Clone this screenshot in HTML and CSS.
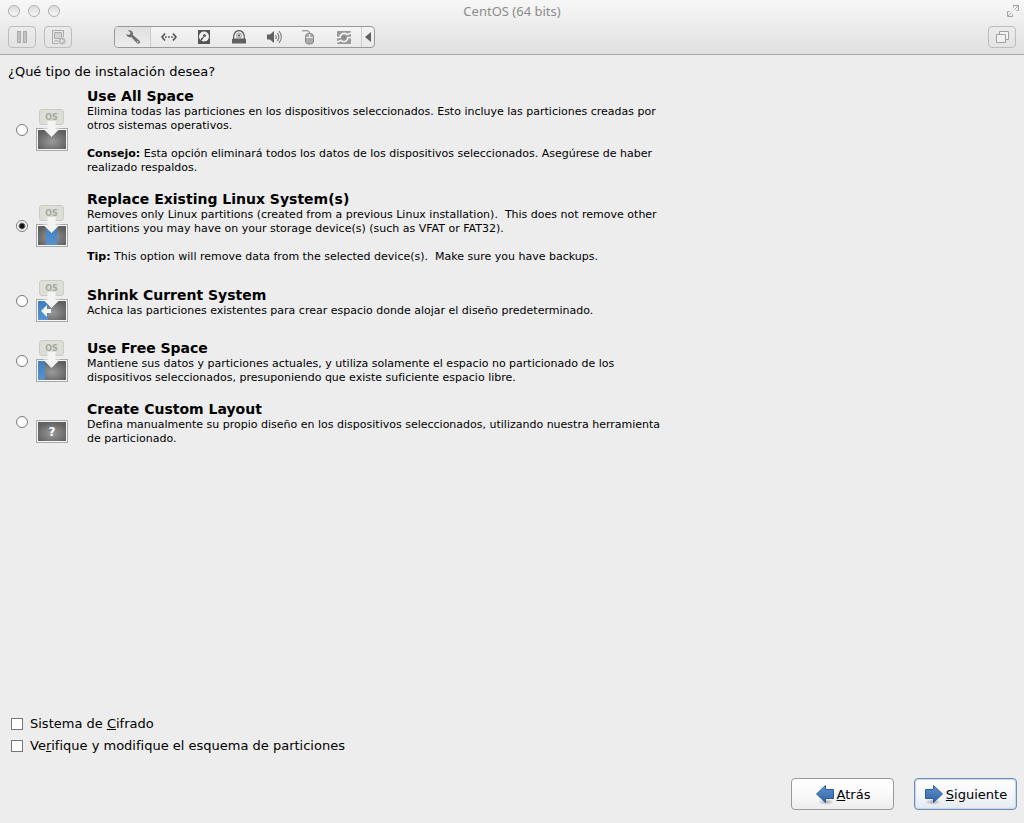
FILE: index.html
```html
<!DOCTYPE html>
<html lang="es">
<head>
    <meta charset="UTF-8">
    <meta name="viewport" content="width=device-width, initial-scale=1.0">
    <title>CentOS (64 bits)</title>
    <link rel="stylesheet" href="styles.css">
</head>
<body>
    <!-- Piezas comunes de los iconos -->
    <svg class="defs" aria-hidden="true">
        <defs>
            <radialGradient id="screenFill" cx="50%" cy="60%" r="60%">
                <stop offset="0" stop-color="#9a9a9a"/>
                <stop offset="1" stop-color="#606060"/>
            </radialGradient>
            <linearGradient id="blueFill" x1="0" y1="0" x2="0" y2="1">
                <stop offset="0" stop-color="#3f7fc0"/>
                <stop offset="1" stop-color="#5792cf"/>
            </linearGradient>
            <linearGradient id="arrowFill" x1="0" y1="0" x2="0" y2="1">
                <stop offset="0" stop-color="#5f95cf"/>
                <stop offset="1" stop-color="#2f62a3"/>
            </linearGradient>
            <radialGradient id="shadowFill">
                <stop offset="0" stop-color="#000" stop-opacity="0.3"/>
                <stop offset="1" stop-color="#000" stop-opacity="0"/>
            </radialGradient>
        </defs>
        <symbol id="screen" viewBox="0 0 32 42">
            <rect x="0.5" y="19.5" width="31" height="22" fill="#f6f6f6" stroke="#a9a9a9"/>
            <rect x="2" y="21" width="28" height="19" fill="url(#screenFill)"/>
        </symbol>
        <symbol id="box" viewBox="0 0 32 42">
            <rect x="3.5" y="0.5" width="24" height="15" rx="2.5" fill="#dcdfd6" stroke="#cbcec6"/>
            <path d="M11.500 12h8v7.500h4.500L15.500 28 7 19.500h4.500z" fill="#f4f5f2"/>
        </symbol>
    </svg>

    <!-- Ventana -->
    <header class="titlebar">
        <div class="title-row">
            <div class="lights">
                <button type="button" aria-label="Cerrar"></button>
                <button type="button" aria-label="Minimizar"></button>
                <button type="button" aria-label="Maximizar"></button>
            </div>
            <h1>CentOS (64 bits)</h1>
            <button type="button" class="fullscreen" aria-label="Pantalla completa">
                <svg width="14" height="14" viewBox="0 0 14 14" fill="none" stroke="#a2a2a2" stroke-width="1">
                    <path d="M7.500 1.500h5v5M12 2L8.500 5.500M10.500 6.500h2M7.500 3.500v-2M6.500 12.500h-5v-5M2 12l3.500-3.500M3.500 7.500h-2M6.500 10.500v2"/>
                </svg>
            </button>
        </div>
        <div class="toolbar">
            <button type="button" class="tool" aria-label="Pausar">
                <svg width="16" height="16" viewBox="0 0 16 16" fill="#c3c3c3" stroke="#aaa">
                    <rect x="3.500" y="2.500" width="3" height="11"/>
                    <rect x="9.500" y="2.500" width="3" height="11"/>
                </svg>
            </button>
            <button type="button" class="tool" aria-label="Instantáneas">
                <svg width="16" height="16" viewBox="0 0 16 16" fill="none" stroke="#aaa">
                    <path d="M8 14.500H2.500v-13h11V8"/>
                    <path d="M4.500 3.500h7v6h-7z" fill="#d2d2d2"/>
                    <path d="M4 12h4"/>
                    <circle cx="12" cy="12" r="3.500" fill="#bbb" stroke="none"/>
                    <path d="M10.500 12h3M12 10.500v3" stroke="#eee"/>
                </svg>
            </button>
            <div class="segments">
                <button type="button" class="active" aria-label="Configuración">
                    <svg width="16" height="16" viewBox="0 0 16 16">
                        <path d="M3 1.500C5.500.8 8 2 8 4.700c0 .6 0 .9-.2 1.300l6.500 5.400c1.200 1.200.8 2.900-.5 3.200-.9.300-1.700-.1-2.300-.8L6.300 7.900C4 8.800 1.500 7.600 1 5.100l2.300.8L5.200 5l.2-1.600z" fill="#707070"/>
                        <circle cx="12.600" cy="12.800" r="0.800" fill="#eee"/>
                    </svg>
                </button>
                <button type="button" aria-label="Red">
                    <svg width="16" height="16" viewBox="0 0 16 16" fill="none" stroke="#505050" stroke-width="1.600">
                        <path d="M4 4.500L1 8l3 3.500M12 4.500L15 8l-3 3.500"/>
                        <path d="M4 8h8.500" stroke-dasharray="1.700 1.400"/>
                    </svg>
                </button>
                <button type="button" aria-label="Disco duro">
                    <svg width="16" height="16" viewBox="0 0 16 16">
                        <rect x="2.500" y="1.500" width="11" height="13" fill="#555" stroke="#555"/>
                        <circle cx="8" cy="7.500" r="5" fill="#f0f0f0"/>
                        <circle cx="8.500" cy="6.500" r="1.500" fill="#666"/>
                        <path d="M4 13l1-3.500 4-3-2.500 4z" fill="#555"/>
                        <path d="M10 12l2-2" stroke="#eee"/>
                    </svg>
                </button>
                <button type="button" aria-label="CD/DVD">
                    <svg width="16" height="16" viewBox="0 0 16 16">
                        <path d="M2.500 10C2.500 4.500 4.500 1.700 8 1.700s5.500 2.800 5.500 8.300z" fill="#f0f0f0" stroke="#555" stroke-width="1.200"/>
                        <circle cx="8" cy="6.500" r="2.500" fill="#e4e4e4" stroke="#999"/>
                        <circle cx="8" cy="6.500" r="1" fill="#444"/>
                        <path d="M1 10h14v4.500H1z" fill="#606060"/>
                    </svg>
                </button>
                <button type="button" aria-label="Sonido">
                    <svg width="16" height="16" viewBox="0 0 16 16" fill="none" stroke="#777" stroke-width="1.200">
                        <path d="M1 5.500h3L8 2v12L4 10.500H1z" fill="#606060" stroke="none"/>
                        <path d="M9.500 6c1 1.300 1 2.700 0 4M11.300 4c2 2.600 2 5.400 0 8M13 2.200c3 3.500 3 8.100 0 11.600"/>
                    </svg>
                </button>
                <button type="button" aria-label="Ratón">
                    <svg width="16" height="16" viewBox="0 0 16 16" fill="none" stroke="#777">
                        <path d="M1 2.500c1-1.500 2.500-.5 4-.7 2-.3 3.500.2 3.500 2.700"/>
                        <rect x="4.500" y="4.500" width="8" height="10.500" rx="3" fill="#aaa" stroke="#888"/>
                        <path d="M5 8.500h7M8.500 5v3.500" stroke="#eee"/>
                    </svg>
                </button>
                <button type="button" aria-label="Carpetas compartidas">
                    <svg width="16" height="16" viewBox="0 0 16 16">
                        <rect x="1" y="2" width="14" height="13" rx="1" fill="#999"/>
                        <path d="M1 8.500h3C4.500 4 9 3.500 11 5.500L15 4M15 8.500h-3c-.5 4.500-5 5-7 3L1 13" fill="none" stroke="#f2f2f2" stroke-width="1.600"/>
                        <circle cx="8" cy="8.500" r="1.800" fill="#888"/>
                    </svg>
                </button>
                <button type="button" class="collapse" aria-label="Ocultar">
                    <svg width="6" height="10" viewBox="0 0 6 10"><path d="M6 0v10L0 5z" fill="#606060"/></svg>
                </button>
            </div>
            <button type="button" class="tool last" aria-label="Unity">
                <svg width="16" height="16" viewBox="0 0 16 16" fill="#f2f2f2" stroke="#a0a0a0">
                    <path d="M5.500 2.500h9v8h-9z"/>
                    <path d="M2.500 5.500h9v8h-9z"/>
                </svg>
            </button>
        </div>
    </header>

    <form class="installer">
        <fieldset>
            <legend>¿Qué tipo de instalación desea?</legend>

            <label class="option">
                <input type="radio" name="tipo" value="all">
                <svg width="32" height="42">
                    <use href="#screen"/>
                    <use href="#box"/>
                    <text x="15.5" y="11" class="os-text">OS</text>
                </svg>
                <span class="text">
                    <strong class="name">Use All Space</strong>
                    <span>Elimina todas las particiones en los dispositivos seleccionados. Esto incluye las particiones creadas por otros sistemas operativos.</span>
                    <span class="tip"><b>Consejo:</b> Esta opción eliminará todos los datos de los dispositivos seleccionados. Asegúrese de haber realizado respaldos.</span>
                </span>
            </label>

            <label class="option">
                <input type="radio" name="tipo" value="replace" checked>
                <svg width="32" height="42">
                    <use href="#screen"/>
                    <rect x="10" y="21" width="11" height="19" fill="url(#blueFill)"/>
                    <use href="#box"/>
                    <text x="15.5" y="11" class="os-text">OS</text>
                </svg>
                <span class="text">
                    <strong class="name">Replace Existing Linux System(s)</strong>
                    <span>Removes only Linux partitions (created from a previous Linux installation).&nbsp; This does not remove other partitions you may have on your storage device(s) (such as VFAT or FAT32).</span>
                    <span class="tip"><b>Tip:</b> This option will remove data from the selected device(s).&nbsp; Make sure you have backups.</span>
                </span>
            </label>

            <label class="option">
                <input type="radio" name="tipo" value="shrink">
                <svg width="32" height="42">
                    <use href="#screen"/>
                    <rect x="2" y="21" width="10" height="19" fill="url(#blueFill)"/>
                    <use href="#box"/>
                    <path d="M5 31l6-6v4h4v4h-4v4z" fill="#f4f5f2"/>
                    <text x="15.5" y="11" class="os-text">OS</text>
                </svg>
                <span class="text">
                    <strong class="name">Shrink Current System</strong>
                    <span>Achica las particiones existentes para crear espacio donde alojar el diseño predeterminado.</span>
                </span>
            </label>

            <label class="option">
                <input type="radio" name="tipo" value="free">
                <svg width="32" height="42">
                    <use href="#screen"/>
                    <rect x="2" y="21" width="7" height="19" fill="url(#blueFill)"/>
                    <use href="#box"/>
                    <text x="15.5" y="11" class="os-text">OS</text>
                </svg>
                <span class="text">
                    <strong class="name">Use Free Space</strong>
                    <span>Mantiene sus datos y particiones actuales, y utiliza solamente el espacio no particionado de los dispositivos seleccionados, presuponiendo que existe suficiente espacio libre.</span>
                </span>
            </label>

            <label class="option">
                <input type="radio" name="tipo" value="custom">
                <svg width="32" height="42">
                    <use href="#screen"/>
                    <text x="16" y="35" class="question">?</text>
                </svg>
                <span class="text">
                    <strong class="name">Create Custom Layout</strong>
                    <span>Defina manualmente su propio diseño en los dispositivos seleccionados, utilizando nuestra herramienta de particionado.</span>
                </span>
            </label>
        </fieldset>

        <div class="checks">
            <label><input type="checkbox" name="cifrado"><span>Sistema de <u>C</u>ifrado</span></label>
            <label><input type="checkbox" name="verificar"><span>Ve<u>r</u>ifique y modifique el esquema de particiones</span></label>
        </div>

        <div class="actions">
            <button type="button">
                <svg width="20" height="22" viewBox="0 0 20 22">
                    <ellipse cx="11" cy="19" rx="8" ry="3" fill="url(#shadowFill)"/>
                    <path d="M1.500 11L10.500 2.500v4h8v9h-8v4z" fill="url(#arrowFill)" stroke="#2d5c99" stroke-linejoin="round"/>
                </svg>
                <span><u>A</u>trás</span>
            </button>
            <button type="button" class="default">
                <svg width="20" height="22" viewBox="0 0 20 22">
                    <ellipse cx="9" cy="19" rx="8" ry="3" fill="url(#shadowFill)"/>
                    <path d="M18.500 11L9.500 2.500v4h-8v9h8v4z" fill="url(#arrowFill)" stroke="#2d5c99" stroke-linejoin="round"/>
                </svg>
                <span><u>S</u>iguiente</span>
            </button>
        </div>
    </form>
</body>
</html>
```
FILE: styles.css
```css
* {
    box-sizing: border-box;
}

body {
    display: flex;
    flex-direction: column;
    min-height: 100vh;
    margin: 0;
    background-color: #ededed;
    color: #000;
    font-family: "DejaVu Sans", sans-serif;
    font-size: 13px;
}

button {
    margin: 0;
    padding: 0;
    border: none;
    background: none;
    font-family: inherit;
}

.defs {
    position: absolute;
    width: 0;
    height: 0;
}

/* Barra de la ventana */
.titlebar {
    padding: 0 8px 6px;
    background: linear-gradient(#f7f7f7, #e0e0e0);
    border-bottom: 1px solid #a8a8a8;
}

.title-row {
    display: grid;
    grid-template-columns: 1fr auto 1fr;
    align-items: center;
    height: 22px;
}

.title-row h1 {
    margin: 0;
    color: #8c8c8c;
    font-family: "Noto Sans", sans-serif;
    font-size: 13px;
    font-weight: normal;
}

.lights {
    display: flex;
    gap: 8px;
}

.lights button {
    width: 12px;
    height: 12px;
    border: 1px solid #b0b0b0;
    border-radius: 50%;
    background: linear-gradient(#dcdcdc, #f6f6f6);
}

.fullscreen {
    justify-self: end;
    height: 14px;
    margin-right: -4px;
}

.fullscreen svg {
    display: block;
}

.toolbar {
    display: flex;
    gap: 8px;
    padding-top: 4px;
}

.tool {
    display: flex;
    align-items: center;
    justify-content: center;
    width: 28px;
    height: 22px;
    border: 1px solid #bdbdbd;
    border-radius: 4px;
}

.tool.last {
    margin-left: auto;
}

.segments {
    display: flex;
    height: 22px;
    margin-left: 34px;
    overflow: hidden;
    border: 1px solid #999;
    border-radius: 4px;
    background: linear-gradient(#f4f4f4, #e9e9e9);
}

.segments button {
    display: flex;
    align-items: center;
    justify-content: center;
    width: 35px;
}

.segments .active {
    width: 36px;
    border-right: 1px solid #ccc;
    background: linear-gradient(#e0e0e0, #ececec);
}

.segments .collapse {
    width: 13px;
    border-left: 1px solid #ccc;
}

/* Contenido del instalador */
.installer {
    display: flex;
    flex: 1;
    flex-direction: column;
    padding: 8px 7px 13px 8px;
}

fieldset {
    display: flex;
    flex-direction: column;
    gap: 15px;
    margin: 0;
    padding: 0;
    border: none;
}

legend {
    margin-bottom: 7px;
    padding: 0;
    line-height: 17px;
}

.option {
    display: flex;
    align-items: center;
    min-height: 45px;
    padding-left: 8px;
}

.option svg {
    flex: none;
    margin: 0 19px 2px 8px;
}

.option input {
    margin-bottom: 2px;
}

.text {
    max-width: 580px;
    font-size: 11px;
    line-height: 14px;
}

.text span {
    display: block;
}

.text .name {
    display: block;
    font-size: 14px;
    line-height: 18px;
}

.text .tip {
    margin-top: 14px;
}

.os-text {
    fill: #a5aaa0;
    font-size: 8px;
    font-weight: bold;
    text-anchor: middle;
}

.question {
    fill: #fff;
    font-size: 12px;
    font-weight: bold;
    text-anchor: middle;
}

input {
    flex: none;
    width: 12px;
    height: 12px;
    margin: 0;
    appearance: none;
    border: 1px solid #777;
    background-color: #fff;
}

input[type="radio"] {
    border-radius: 50%;
}

input[type="radio"]:checked {
    background-image: radial-gradient(circle, #111 0, #111 2px, #fff 4px);
}

.checks {
    display: flex;
    flex-direction: column;
    gap: 5px;
    margin-top: auto;
    padding-left: 3px;
}

.checks label {
    display: flex;
    align-items: center;
    gap: 7px;
    line-height: 17px;
}

.actions {
    display: flex;
    justify-content: flex-end;
    gap: 20px;
    margin-top: 24px;
}

.actions button {
    display: flex;
    align-items: center;
    justify-content: center;
    gap: 2px;
    width: 103px;
    height: 32px;
    border: 1px solid #9a9a9a;
    border-radius: 4px;
    background: linear-gradient(#fff, #fafafa 50%, #ececec);
    color: #000;
    font-size: 13px;
}

.actions .default {
    border-color: #6b8fba;
    background: linear-gradient(#fff, #f4f6f9 50%, #e6ebf1);
    box-shadow: inset 0 0 1px 1px #c4d5e8;
}
```
